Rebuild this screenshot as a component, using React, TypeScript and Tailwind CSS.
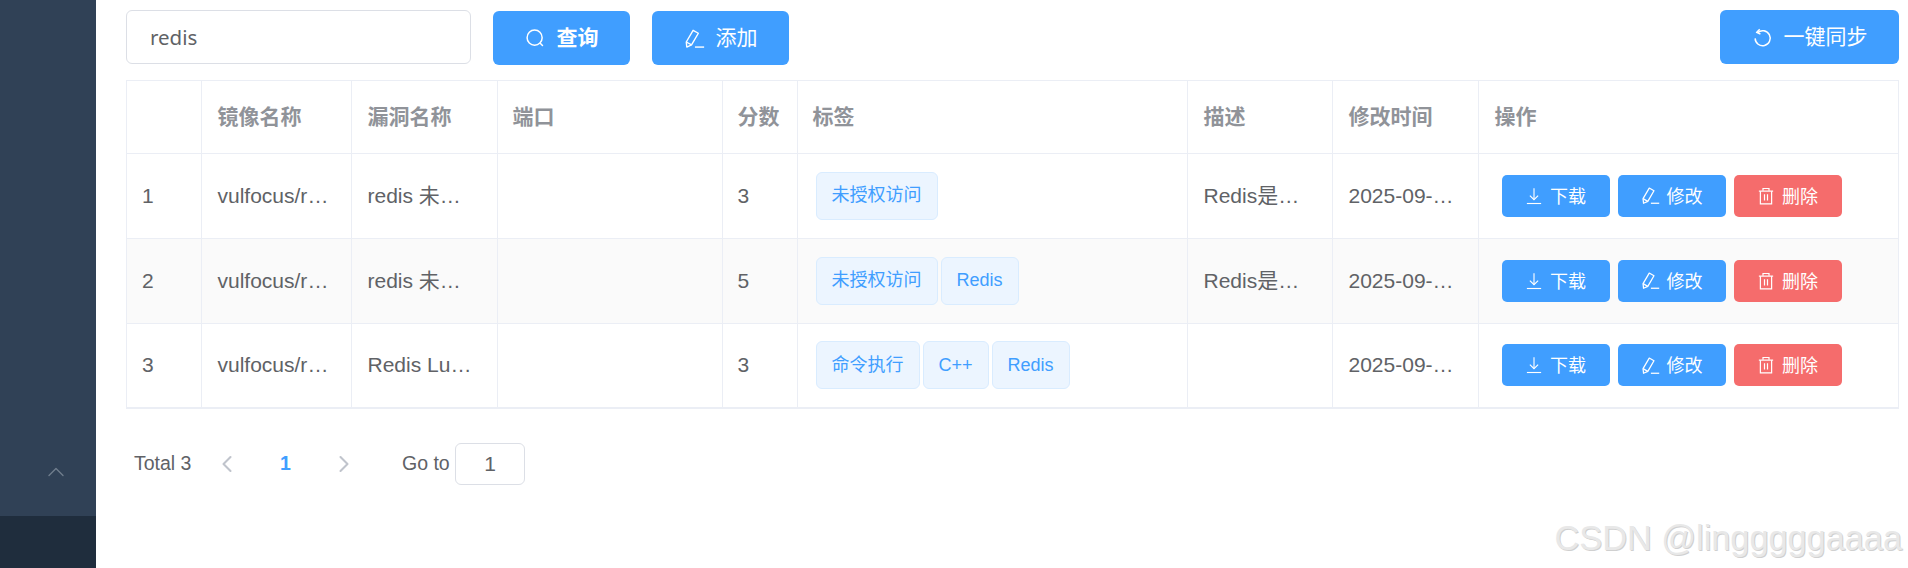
import React from 'react';
import { ChevronLeft, ChevronRight, ChevronUp } from 'lucide-react';

const Sans = "[font-family:'Noto_Sans','Noto_Sans_CJK_SC',sans-serif]";

const SearchIcon = ({ className }: { className?: string }) => (
  <svg viewBox="0 0 24 24" fill="none" stroke="currentColor" strokeWidth="1.7" className={className}>
    <circle cx="11" cy="11" r="8.6" />
    <path d="M17.4 17.4 20 20" strokeLinecap="round" />
  </svg>
);

const EditIcon = ({ className }: { className?: string }) => (
  <svg viewBox="0 0 24 24" fill="none" stroke="currentColor" strokeWidth="1.6" strokeLinejoin="round" className={className}>
    <path d="M3.2 21.8 2.6 16 10.4 2.6l6 3.4L8.6 19.4z" />
    <path d="M2.6 16l6 3.4" />
    <path d="M12.5 21.8H23" />
  </svg>
);

const RefreshIcon = ({ className }: { className?: string }) => (
  <svg viewBox="0 0 24 24" fill="none" stroke="currentColor" strokeWidth="1.7" className={className}>
    <path d="M6.5 6.4A8.6 8.6 0 1 1 3.6 13" />
    <path d="M8.8 2.6 5.2 6.2 9.6 8" strokeLinejoin="round" />
  </svg>
);

const DownloadIcon = ({ className }: { className?: string }) => (
  <svg viewBox="0 0 24 24" fill="none" stroke="currentColor" strokeWidth="1.5" className={className}>
    <path d="M12 1.5V17" />
    <path d="M6.5 11.5 12 17l5.5-5.5" />
    <path d="M2.5 22h19" />
  </svg>
);

const TrashIcon = ({ className }: { className?: string }) => (
  <svg viewBox="0 0 24 24" fill="none" stroke="currentColor" strokeWidth="1.6" className={className}>
    <path d="M2.5 5.5h19" />
    <path d="M8 5V2h8v3" />
    <path d="M4.5 5.5v17h15v-17" />
    <path d="M10 9.5v8.5M14 9.5v8.5" />
  </svg>
);

const TopButton = ({ icon, label, className }: { icon: React.ReactNode; label: string; className?: string }) => (
  <button className={`h-[54px] rounded-[6px] bg-[#409eff] text-white text-[21px] flex items-center justify-center gap-[11px] ${Sans} ${className ?? ''}`}>
    {icon}
    <span>{label}</span>
  </button>
);

const RowButton = ({ icon, label, danger }: { icon: React.ReactNode; label: string; danger?: boolean }) => (
  <button className={`w-[108px] h-[42px] rounded-[5px] text-white text-[18px] flex items-center justify-center gap-[7px] ${Sans} ${danger ? 'bg-[#f56c6c]' : 'bg-[#409eff]'}`}>
    {icon}
    <span className="pt-px">{label}</span>
  </button>
);

const Tag = ({ label }: { label: string }) => (
  <span className="h-12 px-[15px] flex items-center rounded-[6px] border border-[#d9ecff] bg-[#ecf5ff] text-[#409eff] text-[18px]">
    {label}
  </span>
);

const Clip = ({ children, left }: { children?: React.ReactNode; left?: boolean }) => (
  <div className={`${left ? 'pl-[15px]' : 'pl-[16px]'} pr-[20px] truncate`}>{children}</div>
);

const rows = [
  {
    no: '1',
    image: 'vulfocus/redis-unauthorized:latest',
    name: 'redis 未授权访问漏洞',
    score: '3',
    tags: ['未授权访问'],
    desc: 'Redis是一个开源的内存数据库',
    time: '2025-09-12 10:21:33',
  },
  {
    no: '2',
    image: 'vulfocus/redis-unauthorized:4.0',
    name: 'redis 未授权访问',
    score: '5',
    tags: ['未授权访问', 'Redis'],
    desc: 'Redis是一个开源的内存数据库',
    time: '2025-09-12 10:21:34',
  },
  {
    no: '3',
    image: 'vulfocus/redis-cve_2022_0543:latest',
    name: 'Redis Lua 沙盒绕过命令执行',
    score: '3',
    tags: ['命令执行', 'C++', 'Redis'],
    desc: '',
    time: '2025-09-12 10:21:35',
  },
];

const headers = ['', '镜像名称', '漏洞名称', '端口', '分数', '标签', '描述', '修改时间', '操作'];

const App: React.FC = () => {
  return (
    <div className="w-[1908px] h-[568px] flex overflow-hidden bg-white font-['Liberation_Sans','Noto_Sans_CJK_SC',sans-serif]">
      <aside className="w-24 flex flex-col bg-[#304156]">
        <div className="flex-1 flex items-end justify-center pb-[30px] pl-[16px]">
          <ChevronUp className="w-7 h-7 text-[#6f7d8d]" strokeWidth={1.2} />
        </div>
        <div className="h-[52px] bg-[#1f2d3d]" />
      </aside>

      <main className="flex-1 relative pl-[30px] pr-[9px] pt-[10px]">
        <div className="flex items-start h-[54px]">
          <div className={`w-[345px] h-[54px] rounded-[6px] border border-[#dcdfe6] pl-[23px] pt-px flex items-center text-[20.5px] text-[#606266] ${Sans}`}>
            redis
          </div>
          <TopButton icon={<SearchIcon className="w-[21px] h-[21px]" />} label="查询" className="w-[137px] ml-[22px] mt-px font-bold" />
          <TopButton icon={<EditIcon className="w-[21px] h-[21px]" />} label="添加" className="w-[137px] ml-[22px] mt-px" />
          <TopButton icon={<RefreshIcon className="w-[21px] h-[21px]" />} label="一键同步" className="w-[179px] ml-auto" />
        </div>

        <div className="mt-[16px] border-l border-t border-b border-[#ebeef5]">
          <table className="w-full table-fixed border-collapse">
            <colgroup>
              <col className="w-[74px]" />
              <col className="w-[150px]" />
              <col className="w-[146px]" />
              <col className="w-[225px]" />
              <col className="w-[75px]" />
              <col className="w-[390px]" />
              <col className="w-[145px]" />
              <col className="w-[146px]" />
              <col />
            </colgroup>
            <thead>
              <tr className="h-[72px]">
                {headers.map((h, i) => (
                  <th key={i} className="border-r border-b border-[#ebeef5] text-left text-[21px] font-bold text-[#909399] p-0">
                    <div className={`${i >= 3 && i <= 5 ? 'pl-[15px]' : 'pl-[16px]'} pb-[2px] [font-family:'Noto_Sans_CJK_SC',sans-serif]`}>{h}</div>
                  </th>
                ))}
              </tr>
            </thead>
            <tbody>
              {rows.map((r, i) => (
                <tr key={r.no} className={`text-[21px] text-[#606266] ${i === 2 ? 'h-[84px]' : 'h-[85px]'} ${i === 1 ? 'bg-[#fafafa]' : 'bg-white'}`}>
                  <td className="border-r border-b border-[#ebeef5] p-0"><Clip left>{r.no}</Clip></td>
                  <td className="border-r border-b border-[#ebeef5] p-0"><Clip>{r.image}</Clip></td>
                  <td className="border-r border-b border-[#ebeef5] p-0"><Clip>{r.name}</Clip></td>
                  <td className="border-r border-b border-[#ebeef5] p-0" />
                  <td className="border-r border-b border-[#ebeef5] p-0"><Clip left>{r.score}</Clip></td>
                  <td className="border-r border-b border-[#ebeef5] p-0">
                    <div className="pl-[18px] flex gap-[3px]">
                      {r.tags.map(t => <Tag key={t} label={t} />)}
                    </div>
                  </td>
                  <td className="border-r border-b border-[#ebeef5] p-0"><Clip>{r.desc}</Clip></td>
                  <td className="border-r border-b border-[#ebeef5] p-0"><Clip>{r.time}</Clip></td>
                  <td className="border-r border-b border-[#ebeef5] p-0">
                    <div className="pl-[23px] flex gap-[8px]">
                      <RowButton icon={<DownloadIcon className="w-[18px] h-[18px]" />} label="下载" />
                      <RowButton icon={<EditIcon className="w-[19px] h-[19px]" />} label="修改" />
                      <RowButton icon={<TrashIcon className="w-[18px] h-[18px]" />} label="删除" danger />
                    </div>
                  </td>
                </tr>
              ))}
            </tbody>
          </table>
        </div>

        <div className="mt-[34px] ml-[8px] h-[42px] flex items-center text-[19.5px] text-[#606266]">
          <span className="w-[79px]">Total 3</span>
          <ChevronLeft className="w-7 h-7 text-[#c0c4cc]" strokeWidth={1.8} />
          <span className="w-[89px] text-center font-bold text-[#409eff]">1</span>
          <ChevronRight className="w-7 h-7 text-[#c0c4cc]" strokeWidth={1.8} />
          <span className="ml-[44px] w-[53px] pt-px">Go to</span>
          <div className="w-[70px] h-[42px] rounded-[6px] border border-[#dcdfe6] flex items-center justify-center text-[21px]">1</div>
        </div>

        <div className="absolute right-[6px] bottom-[13px] text-[34.3px] leading-none text-[#e8e8e8] [text-shadow:1px_1px_0_#d0d0d0] font-['Liberation_Sans',sans-serif]">
          CSDN @lingggggaaaa
        </div>
      </main>
    </div>
  );
};

export default App;
